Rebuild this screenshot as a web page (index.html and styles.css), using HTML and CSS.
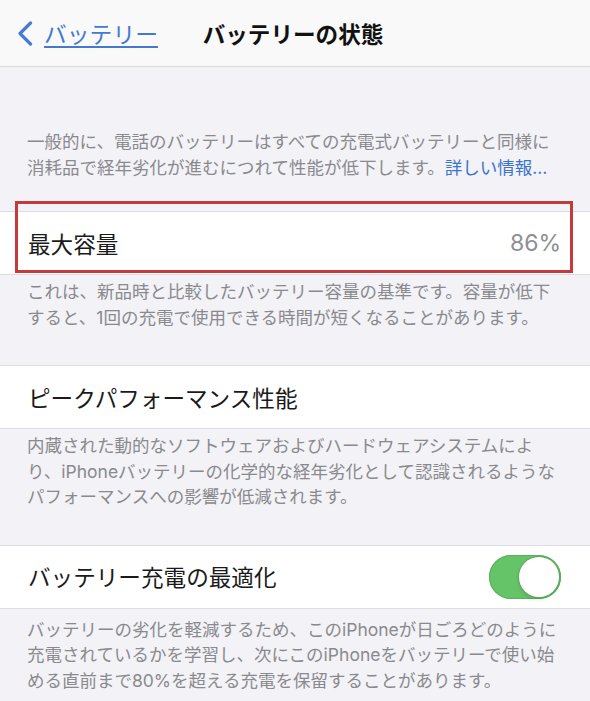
FILE: index.html
```html
<!DOCTYPE html>
<html lang="ja">
<head>
  <meta charset="UTF-8">
  <meta name="viewport" content="width=device-width, initial-scale=1.0">
  <title>バッテリーの状態</title>
  <link rel="stylesheet" href="styles.css">
</head>
<body>
  <header class="nav">
    <a class="nav-back" href="#">
      <svg class="nav-chevron" xmlns="http://www.w3.org/2000/svg" viewBox="0 0 16 25">
        <path d="M13.5 2 L3 12.5 L13.5 23"/>
      </svg>
      <span class="nav-back-label">バッテリー</span>
    </a>
    <h1 class="nav-title">バッテリーの状態</h1>
  </header>

  <main class="settings">
    <p class="group-note group-note-first">一般的に、電話のバッテリーはすべての充電式バッテリーと同様に<br>消耗品で経年劣化が進むにつれて性能が低下します。<a class="note-link" href="#">詳しい情報...</a></p>

    <div class="group">
      <div class="cell cell-marked">
        <span class="cell-label">最大容量</span>
        <span class="cell-value">86%</span>
      </div>
    </div>
    <p class="group-note">これは、新品時と比較したバッテリー容量の基準です。容量が低下<br>すると、1回の充電で使用できる時間が短くなることがあります。</p>

    <div class="group">
      <div class="cell">
        <span class="cell-label">ピークパフォーマンス性能</span>
      </div>
    </div>
    <p class="group-note">内蔵された動的なソフトウェアおよびハードウェアシステムによ<br>り、iPhoneバッテリーの化学的な経年劣化として認識されるような<br>パフォーマンスへの影響が低減されます。</p>

    <div class="group">
      <div class="cell">
        <span class="cell-label">バッテリー充電の最適化</span>
        <span class="switch switch-on"><span class="switch-knob"></span></span>
      </div>
    </div>
    <p class="group-note group-note-last">バッテリーの劣化を軽減するため、このiPhoneが日ごろどのように<br>充電されているかを学習し、次にこのiPhoneをバッテリーで使い始<br>める直前まで80%を超える充電を保留することがあります。</p>
  </main>
</body>
</html>
```

FILE: styles.css
```css
/* ベース */
* {
  margin: 0;
  padding: 0;
  box-sizing: border-box;
}

body {
  font-family: Inter, 'Noto Sans CJK JP', sans-serif;
  background-color: #f2f2f7;
  color: #1c1c1e;
  overflow: hidden;
}

/* ナビゲーションバー */
.nav {
  display: grid;
  grid-template-columns: 1fr auto 1fr;
  align-items: center;
  height: 67px;
  background-color: #f9f9f9;
  border-bottom: 1px solid #d9d9de;
}

.nav-back {
  display: flex;
  align-items: center;
  gap: 11px;
  padding-left: 17px;
  color: #4479d3;
  text-decoration: none;
}

.nav-chevron {
  width: 16px;
  height: 25px;
  fill: none;
  stroke: #4a7bd2;
  stroke-width: 3.2;
  stroke-linecap: round;
  stroke-linejoin: round;
}

.nav-back-label {
  font-size: 22.8px;
  text-decoration: underline;
  text-decoration-thickness: 2px;
  text-underline-offset: 3px;
}

.nav-title {
  font-size: 22.6px;
  font-weight: bold;
  color: #111;
  margin-left: -4px;
}

/* 設定グループ */
.group {
  background-color: #fff;
  border-top: 1px solid #dcdce1;
  border-bottom: 1px solid #dcdce1;
}

.cell {
  position: relative;
  display: flex;
  align-items: center;
  justify-content: space-between;
  height: 62px;
  padding: 0 29px 0 28px;
}

.cell-label {
  font-size: 22.6px;
  color: #1a1a1a;
}

.cell-value {
  font-size: 23px;
  color: #8e8e93;
}

/* 注釈の赤枠 */
.cell-marked::after {
  content: '';
  position: absolute;
  left: 15px;
  right: 17px;
  top: -11px;
  bottom: 1px;
  border: 3px solid #c63a3c;
}

/* グループ下の説明 */
.group-note {
  padding: 4px 20px 35px 27px;
  font-size: 17.5px;
  line-height: 25.5px;
  color: #8a8a8e;
  white-space: nowrap;
}

.group-note-first {
  padding-top: 62px;
  padding-bottom: 31px;
}

.group-note-last {
  padding-top: 8px;
}

.note-link {
  color: #3b74cc;
  text-decoration: none;
}

/* スイッチ */
.switch {
  position: relative;
  width: 72px;
  height: 44px;
  border-radius: 22px;
  background-color: #e9e9eb;
}

.switch-on {
  background-color: #66c468;
  box-shadow: inset 0 0 0 1px #5cae5e;
}

.switch-knob {
  position: absolute;
  top: 2px;
  right: 2px;
  width: 40px;
  height: 40px;
  border-radius: 50%;
  background-color: #fff;
  box-shadow: 0 0 0 1px #5fa861, 0 2px 4px rgba(0, 0, 0, 0.15);
}
```
